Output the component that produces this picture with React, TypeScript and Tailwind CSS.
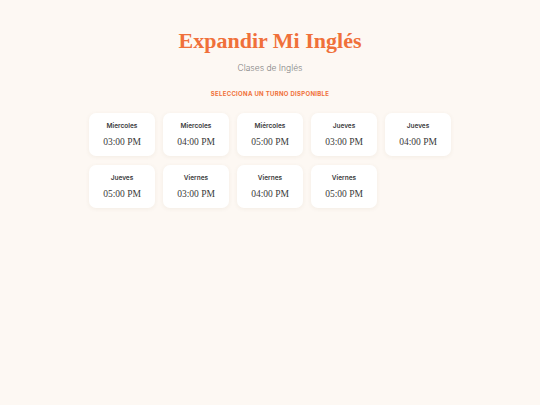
const turnos = [
  { dia: "Miercoles", hora: "03:00 PM" },
  { dia: "Miercoles", hora: "04:00 PM" },
  { dia: "Miércoles", hora: "05:00 PM" },
  { dia: "Jueves", hora: "03:00 PM" },
  { dia: "Jueves", hora: "04:00 PM" },
  { dia: "Jueves", hora: "05:00 PM" },
  { dia: "Viernes", hora: "03:00 PM" },
  { dia: "Viernes", hora: "04:00 PM" },
  { dia: "Viernes", hora: "05:00 PM" },
];

export default function App() {
  return (
    <main className="flex min-h-[405px] w-full flex-col items-center bg-[#fdf8f3] font-['Inter','Liberation_Sans',sans-serif]">
      <h1 className="mt-[27px] font-['Liberation_Serif','DejaVu_Serif',serif] text-[22px] leading-[28px] font-bold text-[#f0703a]">
        Expandir Mi Inglés
      </h1>
      <p className="mt-[7px] text-[8.5px] leading-[12px] font-light text-[#7f7f7f]">Clases de Inglés</p>
      <h2 className="mt-[15px] text-[6px] leading-[10px] font-bold tracking-[0.05em] text-[#f0703a]">
        SELECCIONA UN TURNO DISPONIBLE
      </h2>
      <div className="mt-[14px] grid grid-cols-[repeat(5,66px)] gap-x-[8px] gap-y-[9px]">
        {turnos.map((t, i) => (
          <button
            key={i}
            className="flex h-[43px] flex-col items-center justify-center rounded-[7px] bg-white shadow-[0_1px_4px_rgba(120,80,40,0.07)]"
          >
            <span className="text-[6.5px] leading-[9px] font-semibold text-[#3a3a3a]">{t.dia}</span>
            <span className="mt-[5px] font-['Liberation_Serif','DejaVu_Serif',serif] text-[9.5px] leading-[12px] text-[#3a3a3a]">
              {t.hora}
            </span>
          </button>
        ))}
      </div>
    </main>
  );
}
